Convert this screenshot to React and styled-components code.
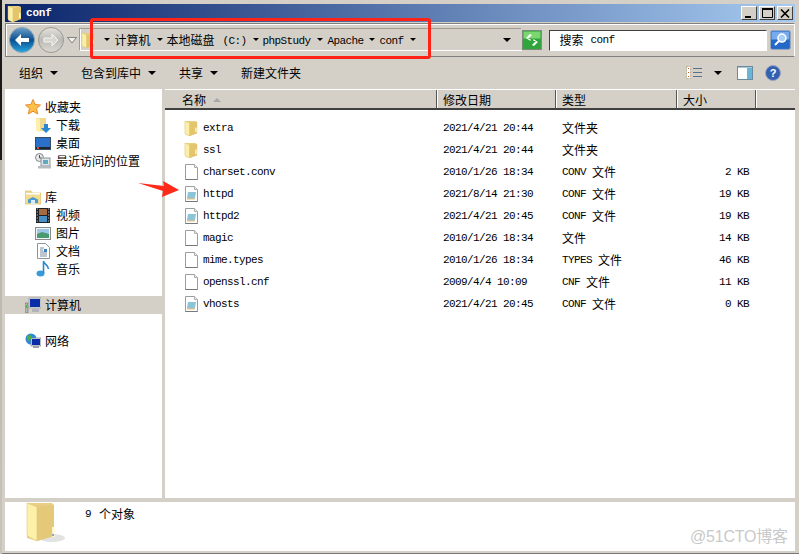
import styled, { createGlobalStyle } from "styled-components";

const Global = createGlobalStyle`
  html, body { margin: 0; padding: 0; background: #d4d0c8; }
  * { box-sizing: border-box; }
`
const CJK = `"Noto Sans CJK SC", sans-serif`

const Page = styled.div`
  width: 799px;
  height: 554px;
  position: relative;
  overflow: hidden;
  display: flex;
  background: #d4d0c8;
  font-family: ${CJK};
  font-size: 12px;
  line-height: 16px;
  color: #000;
`
const Edge = styled.div`
  width: 2px;
  background: linear-gradient(#1a1a1a 0, #1a1a1a 160px, #b8b4ac 160px, #c8c4bc 100%);
`
const Frame = styled.div`
  flex: 1;
  min-width: 0;
  display: flex;
  flex-direction: column;
  padding: 4px 4px 2px 3px;
  border-bottom: 1px solid #777;
`
const TitleBar = styled.div`
  height: 18px;
  flex: none;
  display: flex;
  align-items: center;
  gap: 3px;
  padding: 0 2px 0 2px;
  background: linear-gradient(90deg, #0a246a, #a6caf0);
`
const TitleText = styled.span`
  font-family: "Liberation Mono", monospace;
  font-weight: 700;
  font-size: 11px;
  letter-spacing: -0.2px;
  color: #fff;
`
const WinButtons = styled.div`
  margin-left: auto;
  display: flex;
  gap: 2px;
`
const WinButton = styled.div`
  width: 16px;
  height: 14px;
  background: #d4d0c8;
  border: 1px solid;
  border-color: #fff #404040 #404040 #fff;
  display: flex;
  align-items: center;
  justify-content: center;
`
const NavBar = styled.div`
  height: 34px;
  flex: none;
  display: flex;
  align-items: center;
  margin-top: 1px;
  padding: 0 3px 0 3px;
  border: 1px solid;
  border-color: #808080 #fff #808080 #808080;
  box-shadow: inset 1px 1px 0 #fff;
`
const Arrows = styled.div`
  display: flex;
  align-items: center;
  gap: 3px;
  width: 71px;
`
const Address = styled.div`
  width: 445px;
  height: 22px;
  display: flex;
  align-items: center;
  border-bottom: 1px solid #fff;
  border-left: 1px solid #fff;
  box-shadow: -1px -1px 0 #a09c94;
`
const Crumb = styled.span`
  margin-right: ${props => props.$gap || 5}px;
  white-space: nowrap;
`
const Mono = styled.span`
  display: inline-block;
  font-family: "Liberation Mono", monospace;
  font-size: 11px;
  line-height: 16px;
  letter-spacing: -0.6px;
  white-space: pre;
`
const Tri = styled.i`
  display: inline-block;
  flex: none;
  width: 0;
  height: 0;
  margin: ${props => props.$m || "0 5px 0 0"};
  border-left: ${props => props.$s || 3.5}px solid transparent;
  border-right: ${props => props.$s || 3.5}px solid transparent;
  border-top: ${props => props.$s || 3.5}px solid #000;
`
const Search = styled.div`
  width: 220px;
  height: 21px;
  margin: 0 3px 0 7px;
  display: flex;
  align-items: center;
  gap: 7px;
  padding-left: 10px;
  background: #fff;
  border: 1px solid;
  border-color: #404040 #fff #fff #404040;
`
const CommandBar = styled.div`
  height: 32px;
  flex: none;
  display: flex;
  align-items: center;
  padding: 0 14px 1px 14px;
`
const Command = styled.div`
  display: flex;
  align-items: center;
  gap: 7px;
  margin-right: ${props => props.$mr || 22}px;
`
const CommandIcons = styled.div`
  margin-left: auto;
  display: flex;
  align-items: center;
`
const HelpSlot = styled.div`
  display: flex;
  margin-left: 12px;
`
const Panes = styled.div`
  flex: 1;
  min-height: 0;
  display: flex;
  gap: 3px;
`
const Sidebar = styled.div`
  width: 157px;
  background: #fff;
  padding-top: 9px;
`
const Section = styled.div`
  margin-bottom: 18px;
`
const NavRow = styled.div`
  height: 18px;
  display: flex;
  align-items: center;
  gap: ${props => props.$child ? 5 : 4}px;
  padding-left: ${props => props.$child ? 30 : 20}px;
  background: ${props => props.$active ? "#d4d0c8" : "transparent"};
  white-space: nowrap;
`
const NavIcon = styled.span`
  width: 16px;
  display: flex;
  justify-content: center;
`
const Main = styled.div`
  flex: 1;
  min-width: 0;
  background: #fff;
  display: flex;
  flex-direction: column;
`
const Header = styled.div`
  height: 21px;
  flex: none;
  display: flex;
  background: #d4d0c8;
  border-top: 1px solid #fff;
  border-bottom: 2px solid #404040;
`
const HeaderCell = styled.div`
  width: ${props => props.$w}px;
  display: flex;
  align-items: center;
  gap: 7px;
  padding: 2px 0 0 ${props => props.$pl || 5}px;
  border-right: 1px solid #555;
  box-shadow: 1px 0 0 #fff;
  margin-right: 1px;
`
const SortArrow = styled.i`
  width: 0;
  height: 0;
  border-left: 4px solid transparent;
  border-right: 4px solid transparent;
  border-bottom: 4px solid #a8a8a8;
`
const Rows = styled.div`
  padding-top: 7px;
`
const Row = styled.div`
  height: 22px;
  display: flex;
  align-items: center;
`
const NameCell = styled.div`
  width: 278px;
  display: flex;
  align-items: center;
  gap: 4px;
  padding-left: 19px;
`
const FileIcon = styled.span`
  width: 15px;
  display: flex;
  justify-content: center;
`
const DateCell = styled.div`
  width: 119px;
  display: flex;
  align-items: center;
`
const TypeCell = styled.div`
  width: 90px;
  display: flex;
  align-items: center;
  gap: 6px;
  white-space: nowrap;
`
const SizeCell = styled.div`
  width: 97px;
  display: flex;
  align-items: center;
  justify-content: flex-end;
`
const Details = styled.div`
  height: 49px;
  flex: none;
  margin-top: 4px;
  background: #fff;
  display: flex;
  padding-left: 21px;
`
const DetailsText = styled.div`
  margin: 3px 0 0 19px;
  height: 18px;
  display: flex;
  align-items: center;
  gap: 8px;
`
const RedBox = styled.div`
  position: absolute;
  left: 90px;
  top: 18px;
  width: 341px;
  height: 41px;
  border: 3px solid #ff2216;
  border-radius: 3px;
`
const RedArrow = styled.svg`
  position: absolute;
  left: 138px;
  top: 180px;
`
const Watermark = styled.div`
  position: absolute;
  left: 690px;
  top: 527px;
  font-family: "Liberation Sans", ${CJK};
  font-size: 16px;
  line-height: 20px;
  letter-spacing: -0.2px;
  color: #c9c9c9;
  white-space: nowrap;
`

const FolderIcon = ({ size = 15 }) => (
  <svg width={size} height={size + 1} viewBox="0 0 16 17">
    <path d="M1 1h11l2 1v12l-8 3-5-2z" fill="#e9cf7c" />
    <path d="M1 1l5 2v14l-4-1.500-1-2z" fill="#fbeea8" stroke="#d9c26e" strokeWidth=".5" />
    <path d="M6 3l8-1v12l-8 3z" fill="#e2c56c" />
    <rect x="12" y="8" width="1.500" height="5" fill="#fff6cf" />
  </svg>
)
const BigFolder = () => (
  <svg width="40" height="44" viewBox="0 0 40 44">
    <ellipse cx="26" cy="36" rx="13" ry="4" fill="#e2e2e2" />
    <path d="M1 1h25l2 2v31l-17 5-10-3z" fill="#e8cf85" />
    <path d="M1 1l10 4v34l-8-4-2-2z" fill="#fdf0a8" stroke="#e0c878" strokeWidth=".6" />
    <path d="M11 5l17-2v31l-17 5z" fill="#e3c978" />
    <path d="M26 25h2.500v10H26z" fill="#fff6c8" />
    <circle cx="27" cy="33" r="1" fill="#5f90c0" />
  </svg>
)
const PlainFile = ({ conf }) => (
  <svg width="15" height="16" viewBox="0 0 15 16">
    <path d="M1.500 .5h9l3 3v12h-12z" fill="#fff" stroke="#9c9c9c" />
    <path d="M10.500 .5v3h3" fill="#e8e8e8" stroke="#b0b0b0" />
    <path d="M1.500 15.500h12" stroke="#777" />
    {conf && <path d="M4 6h8l-1 6H3z" fill="#8cc4d8" />}
    {conf && <path d="M3 12h8l-.3 1.400H3z" fill="#d8c090" />}
  </svg>
)
const Star = () => (
  <svg width="16" height="16" viewBox="0 0 16 16">
    <path d="M8 .5l2.200 5 5.300.5-4 3.600 1.200 5.400L8 12.200 3.300 15l1.200-5.400-4-3.600 5.300-.5z" fill="#fbc04a" stroke="#e98a2c" />
  </svg>
)
const Downloads = () => (
  <svg width="15" height="16" viewBox="0 0 15 16">
    <path d="M0 1h10v13H0z" fill="#f0d98c" />
    <path d="M0 1l4 1v13l-4-1z" fill="#fcf0ae" />
    <path d="M8 7h4v4h3l-5 5-5-5h3z" fill="#2a86d0" />
  </svg>
)
const Desktop = () => (
  <svg width="16" height="13" viewBox="0 0 16 13">
    <rect width="16" height="13" fill="#3a4a60" />
    <rect x="1" y="1" width="14" height="9" fill="#2b70c8" />
    <rect x="1" y="10" width="14" height="2" fill="#20242c" />
    <rect x="2" y="10" width="2" height="2" fill="#e05030" />
  </svg>
)
const Recent = () => (
  <svg width="16" height="16" viewBox="0 0 16 16">
    <circle cx="4.500" cy="4.500" r="4" fill="#e8e8e8" stroke="#808890" />
    <path d="M4.500 2v3h2" fill="none" stroke="#555" />
    <rect x="6" y="5" width="9" height="8" fill="#dfe4e6" stroke="#8c9498" />
    <rect x="8" y="7" width="5" height="4" fill="#62a8c0" />
    <rect x="3" y="13" width="13" height="2.500" fill="#b8bcc0" />
  </svg>
)
const Library = () => (
  <svg width="16" height="15" viewBox="0 0 16 15">
    <path d="M0 1h6l1 2h9v11H0z" fill="#f3dc90" stroke="#d0b868" strokeWidth=".6" />
    <rect x="1" y="3" width="14" height="1.500" fill="#fff" />
    <path d="M3 13V9.500L8 7l5 2.500V13z" fill="#4c9ad0" />
    <rect x="6" y="10" width="4" height="4" fill="#d8ecf8" />
  </svg>
)
const Video = () => (
  <svg width="14" height="15" viewBox="0 0 14 15">
    <rect width="14" height="15" fill="#1c2228" />
    <rect x="3" y="1" width="8" height="6" fill="#a86a40" />
    <rect x="3" y="8" width="8" height="6" fill="#4a90c8" />
    <path d="M.8 1h1M.8 4h1M.8 7h1M.8 10h1M.8 13h1M12.200 1h1M12.200 4h1M12.200 7h1M12.200 10h1M12.200 13h1" stroke="#ddd" />
  </svg>
)
const Picture = () => (
  <svg width="16" height="13" viewBox="0 0 16 13">
    <rect x=".5" y=".5" width="15" height="12" fill="#f4f4f4" stroke="#8a8a8a" />
    <rect x="2" y="2" width="12" height="5" fill="#9cc8e8" />
    <path d="M2 7l5-2 7 2v4H2z" fill="#4a9a70" />
  </svg>
)
const Doc = () => (
  <svg width="13" height="16" viewBox="0 0 13 16">
    <path d="M.5 .5h8l4 4v11H.5z" fill="#fff" stroke="#8a94a0" />
    <path d="M3 5h4M3 7h3M3 9h7M3 11h7M3 13h7" stroke="#7a8aa0" />
    <rect x="7" y="6" width="3" height="3" fill="#3a80c0" />
  </svg>
)
const Music = () => (
  <svg width="14" height="16" viewBox="0 0 14 16">
    <ellipse cx="4.500" cy="12.500" rx="4" ry="3" fill="#3a9ad8" />
    <path d="M7.500 12V0c0 3 5 4 5 8" fill="none" stroke="#2a88cc" strokeWidth="1.600" />
  </svg>
)
const Computer = () => (
  <svg width="16" height="16" viewBox="0 0 16 16">
    <rect x="0" y="6" width="3" height="10" fill="#b4b4b0" stroke="#606060" strokeWidth=".5" />
    <rect x="0.800" y="8" width="1.400" height="3" fill="#50b050" />
    <rect x="4" y="1" width="12" height="10" fill="#d8dce0" stroke="#8a9098" strokeWidth=".6" />
    <rect x="5" y="2" width="10" height="8" fill="#0a2ca8" />
    <rect x="7" y="12" width="7" height="3" fill="#b0b4b8" />
  </svg>
)
const Network = () => (
  <svg width="16" height="16" viewBox="0 0 16 16">
    <circle cx="6" cy="6" r="5.500" fill="#2e8ad8" />
    <path d="M2 3l4-1 1 3-3 3-2-2zM7 7l3 1-1 3-2-1z" fill="#4cb040" />
    <rect x="6" y="5" width="10" height="8" fill="#d8dce0" stroke="#707880" strokeWidth=".6" />
    <rect x="7" y="6" width="8" height="6" fill="#0a2ca8" />
    <rect x="8" y="13" width="6" height="2" fill="#9aa0a6" />
  </svg>
)
const BackButton = () => (
  <svg width="26" height="26" viewBox="0 0 26 26">
    <defs>
      <linearGradient id="back" x1="0" y1="0" x2="0" y2="1">
        <stop offset="0" stopColor="#6b9fc8" />
        <stop offset=".5" stopColor="#0a4f8f" />
        <stop offset="1" stopColor="#27a8e0" />
      </linearGradient>
    </defs>
    <circle cx="13" cy="13" r="12.500" fill="url(#back)" stroke="#8fa4b4" />
    <path d="M6 13l6-6v4h8v4h-8v4z" fill="#fff" />
  </svg>
)
const ForwardButton = () => (
  <svg width="26" height="26" viewBox="0 0 26 26">
    <defs>
      <linearGradient id="fwd" x1="0" y1="0" x2="0" y2="1">
        <stop offset="0" stopColor="#e4e2dc" />
        <stop offset=".5" stopColor="#bcbab4" />
        <stop offset="1" stopColor="#dcdad4" />
      </linearGradient>
    </defs>
    <circle cx="13" cy="13" r="12.500" fill="url(#fwd)" stroke="#9a9890" />
    <path d="M20 13l-6-6v4H6v4h8v4z" fill="#d8d6d0" stroke="#f4f4f0" />
  </svg>
)
const Chevron = () => (
  <svg width="10" height="7" viewBox="0 0 10 7">
    <path d="M.5 .5h9L5 6z" fill="#f0f0ec" stroke="#80807c" />
  </svg>
)
const Refresh = () => (
  <svg width="20" height="20" viewBox="0 0 20 20">
    <rect x=".5" y=".5" width="19" height="19" fill="#2fa63a" stroke="#7a8a7a" />
    <rect x="1.500" y="1.500" width="17" height="7" fill="#7ad66e" />
    <path d="M10 5L6 9h2.500v2L4 8l4-4zM10 15l4-4h-2.500V9L16 12l-4 4z" fill="#fff" />
  </svg>
)
const SearchButton = () => (
  <svg width="21" height="20" viewBox="0 0 21 20">
    <rect x=".5" y=".5" width="20" height="19" rx="2" fill="#2468c8" stroke="#98a8b8" />
    <rect x="1.500" y="1.500" width="18" height="8" fill="#78aaf0" />
    <circle cx="12" cy="8" r="4" fill="#a8d0f4" stroke="#fff" strokeWidth="1.600" />
    <path d="M9 11l-4 4" stroke="#fff" strokeWidth="2" />
  </svg>
)
const ViewsIcon = () => (
  <svg width="16" height="13" viewBox="0 0 16 13">
    <rect x=".5" y=".5" width="4" height="12" fill="#fff" stroke="#b8b090" strokeDasharray="2 1" />
    <path d="M2 2.500h1M2 6.500h1M2 10.500h1" stroke="#c05030" />
    <path d="M7 2.500h9M7 6.500h9M7 10.500h9" stroke="#5a7090" />
  </svg>
)
const PreviewIcon = () => (
  <svg width="16" height="14" viewBox="0 0 16 14">
    <rect x=".5" y=".5" width="15" height="13" fill="#fff" stroke="#6a8aa0" />
    <rect x="10" y="1" width="5" height="12" fill="#6ab4d8" />
    <rect x="1" y="1" width="14" height="1" fill="#a8c8d8" />
  </svg>
)
const HelpIcon = () => (
  <svg width="16" height="16" viewBox="0 0 16 16">
    <circle cx="8" cy="8" r="7.500" fill="#3360b0" stroke="#98a4c0" />
    <text x="8" y="12" textAnchor="middle" fontSize="11" fontWeight="700" fill="#fff" fontFamily="Liberation Sans">?</text>
  </svg>
)

const favorites = [
  { label: "下载", icon: <Downloads /> },
  { label: "桌面", icon: <Desktop /> },
  { label: "最近访问的位置", icon: <Recent /> },
]
const libraries = [
  { label: "视频", icon: <Video /> },
  { label: "图片", icon: <Picture /> },
  { label: "文档", icon: <Doc /> },
  { label: "音乐", icon: <Music /> },
]
const files = [
  { name: "extra", date: "2021/4/21 20:44", ext: "", type: "文件夹", size: "", kind: "folder" },
  { name: "ssl", date: "2021/4/21 20:44", ext: "", type: "文件夹", size: "", kind: "folder" },
  { name: "charset.conv", date: "2010/1/26 18:34", ext: "CONV", type: "文件", size: "2 KB", kind: "file" },
  { name: "httpd", date: "2021/8/14 21:30", ext: "CONF", type: "文件", size: "19 KB", kind: "conf" },
  { name: "httpd2", date: "2021/4/21 20:45", ext: "CONF", type: "文件", size: "19 KB", kind: "conf" },
  { name: "magic", date: "2010/1/26 18:34", ext: "", type: "文件", size: "14 KB", kind: "file" },
  { name: "mime.types", date: "2010/1/26 18:34", ext: "TYPES", type: "文件", size: "46 KB", kind: "file" },
  { name: "openssl.cnf", date: "2009/4/4 10:09", ext: "CNF", type: "文件", size: "11 KB", kind: "file" },
  { name: "vhosts", date: "2021/4/21 20:45", ext: "CONF", type: "文件", size: "0 KB", kind: "conf" },
]

const App = () => {
  return (
    <Page>
      <Global />
      <Edge />
      <Frame>
        <TitleBar>
          <FolderIcon size={16} />
          <TitleText>conf</TitleText>
          <WinButtons>
            <WinButton><svg width="10" height="10"><path d="M1 8h6v2H1z" /></svg></WinButton>
            <WinButton><svg width="11" height="10"><path d="M.5 1.500h10v8H.5z" fill="none" stroke="#000" /><path d="M0 .5h11" stroke="#000" strokeWidth="2" /></svg></WinButton>
            <WinButton><svg width="10" height="9"><path d="M1 .5l8 8M9 .5l-8 8" stroke="#000" strokeWidth="1.600" /></svg></WinButton>
          </WinButtons>
        </TitleBar>
        <NavBar>
          <Arrows>
            <BackButton />
            <ForwardButton />
            <Chevron />
          </Arrows>
          <Address>
            <FolderIcon size={15} />
            <Tri $m="0 5px 0 8px" />
            <Crumb $gap={6}>计算机</Crumb>
            <Tri $m="0 4px 0 0" />
            <Crumb $gap={8}>本地磁盘</Crumb>
            <Crumb $gap={6}><Mono>(C:)</Mono></Crumb>
            <Tri $m="0 4px 0 0" />
            <Crumb $gap={6}><Mono>phpStudy</Mono></Crumb>
            <Tri />
            <Crumb $gap={5}><Mono>Apache</Mono></Crumb>
            <Tri />
            <Crumb $gap={6}><Mono>conf</Mono></Crumb>
            <Tri $m="0" />
            <Tri $s={4} $m="0 11px 0 auto" />
          </Address>
          <Refresh />
          <Search>
            <span>搜索</span>
            <Mono>conf</Mono>
          </Search>
          <SearchButton />
        </NavBar>
        <CommandBar>
          <Command $mr={23}>组织 <Tri $s={4} $m="0" /></Command>
          <Command $mr={23}>包含到库中 <Tri $s={4} $m="0" /></Command>
          <Command $mr={23}>共享 <Tri $s={4} $m="0" /></Command>
          <Command>新建文件夹</Command>
          <CommandIcons>
            <ViewsIcon />
            <Tri $s={4} $m="0 15px 0 12px" />
            <PreviewIcon />
            <HelpSlot><HelpIcon /></HelpSlot>
          </CommandIcons>
        </CommandBar>
        <Panes>
          <Sidebar>
            <Section>
              <NavRow><NavIcon><Star /></NavIcon>收藏夹</NavRow>
              {favorites.map(f => <NavRow $child key={f.label}><NavIcon>{f.icon}</NavIcon>{f.label}</NavRow>)}
            </Section>
            <Section>
              <NavRow><NavIcon><Library /></NavIcon>库</NavRow>
              {libraries.map(f => <NavRow $child key={f.label}><NavIcon>{f.icon}</NavIcon>{f.label}</NavRow>)}
            </Section>
            <Section>
              <NavRow $active><NavIcon><Computer /></NavIcon>计算机</NavRow>
            </Section>
            <Section>
              <NavRow><NavIcon><Network /></NavIcon>网络</NavRow>
            </Section>
          </Sidebar>
          <Main>
            <Header>
              <HeaderCell $w={272} $pl={17}>名称 <SortArrow /></HeaderCell>
              <HeaderCell $w={118}>修改日期</HeaderCell>
              <HeaderCell $w={120}>类型</HeaderCell>
              <HeaderCell $w={78}>大小</HeaderCell>
            </Header>
            <Rows>
              {files.map(f => (
                <Row key={f.name}>
                  <NameCell>
                    <FileIcon>
                      {f.kind === "folder" ? <FolderIcon /> : <PlainFile conf={f.kind === "conf"} />}
                    </FileIcon>
                    <Mono>{f.name}</Mono>
                  </NameCell>
                  <DateCell><Mono>{f.date}</Mono></DateCell>
                  <TypeCell>
                    {f.ext && <Mono>{f.ext}</Mono>}
                    {f.type}
                  </TypeCell>
                  <SizeCell><Mono>{f.size}</Mono></SizeCell>
                </Row>
              ))}
            </Rows>
          </Main>
        </Panes>
        <Details>
          <BigFolder />
          <DetailsText><Mono>9</Mono>个对象</DetailsText>
        </Details>
      </Frame>
      <RedBox />
      <RedArrow width="42" height="18" viewBox="0 0 42 18">
        <path d="M0 3l26 3 -1-5 16 9-17 7 1-6z" fill="#ff2a1a" />
      </RedArrow>
      <Watermark>@51CTO博客</Watermark>
    </Page>
  )
}

export default App
